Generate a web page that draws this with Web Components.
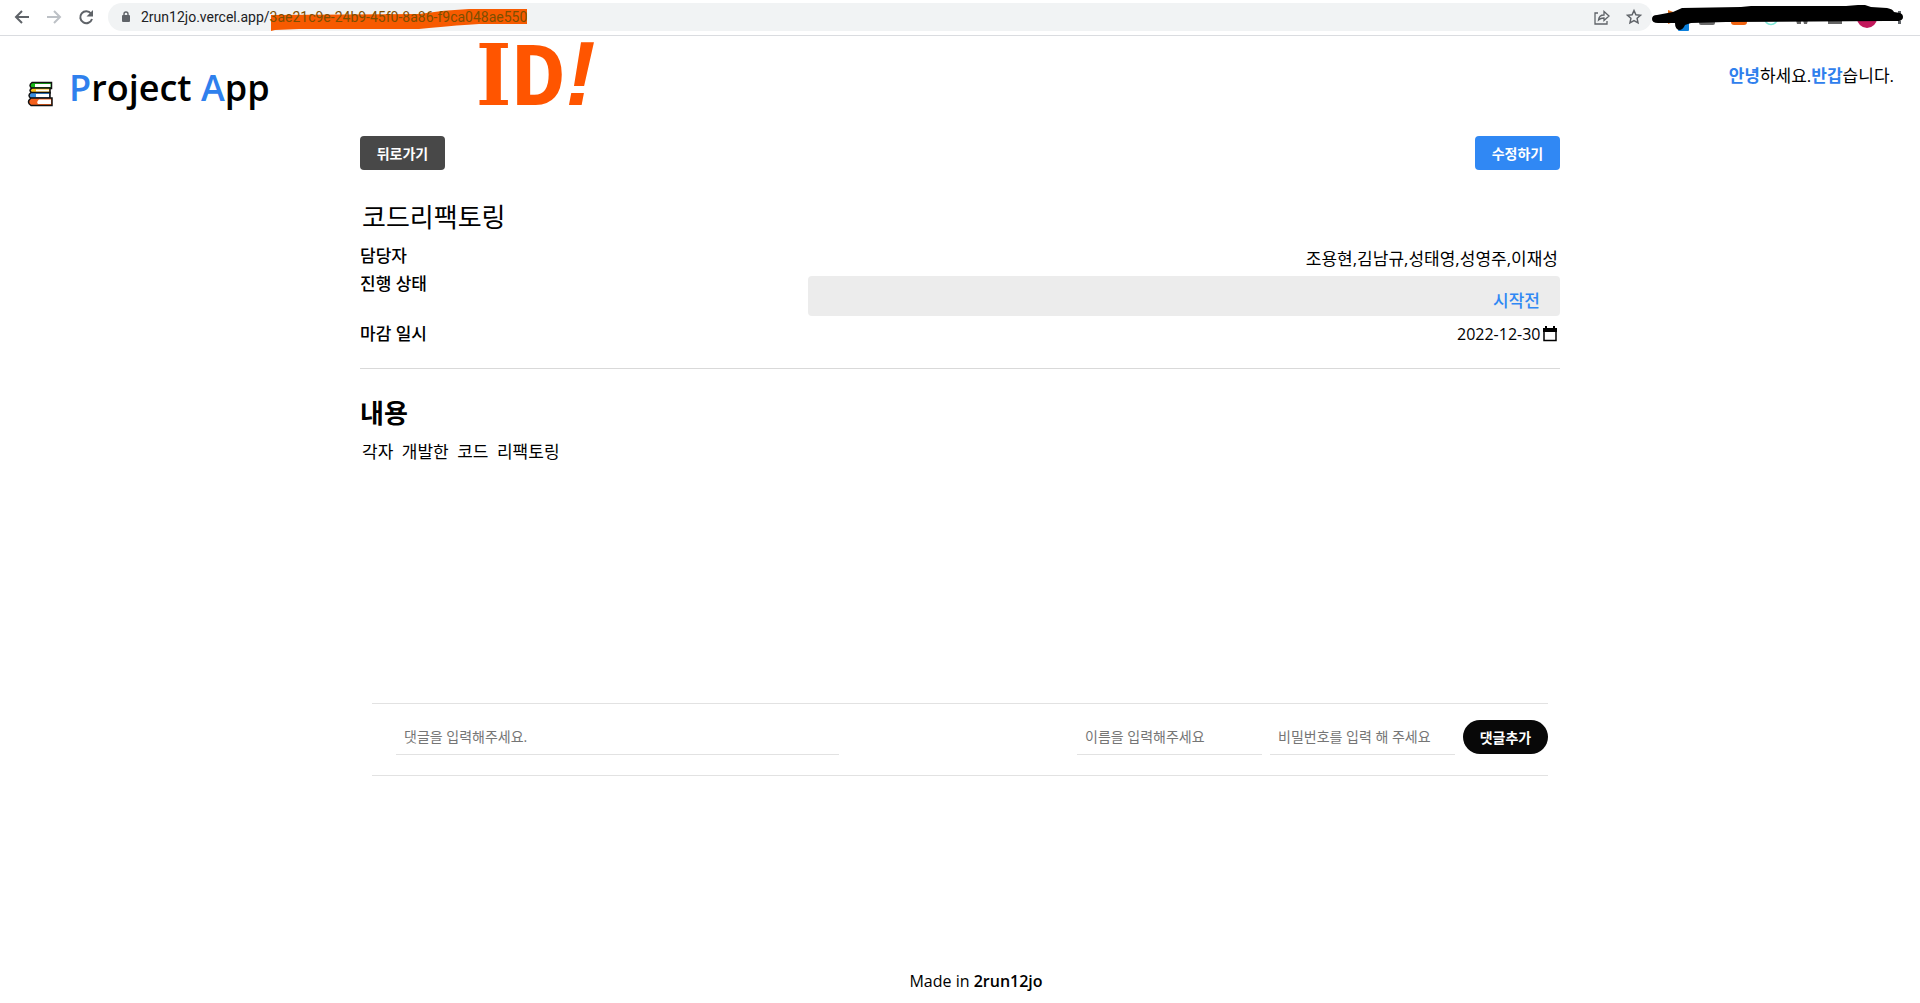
<!DOCTYPE html>
<html lang="ko">
<head>
<meta charset="utf-8">
<title>Project App</title>
<style>
    body {
        margin: 0;
        background: #fff;
        color: #000;
        font-family: "Open Sans", "Noto Sans CJK KR", sans-serif;
        font-size: 16px;
    }
</style>
</head>
<body>
<project-page></project-page>

<script>
function define(name, html, setup) {
    const template = document.createElement("template");
    template.innerHTML = html;

    window.customElements.define(name, class extends HTMLElement {
        constructor() {
            super();
            this.attachShadow({ mode: "open" });
            this.shadowRoot.appendChild(template.content.cloneNode(true));
            if (setup) setup(this, this.shadowRoot);
        }
    });
}

define("browser-bar", `
    <style>
        :host {
            display: flex;
            align-items: center;
            box-sizing: border-box;
            height: 36px;
            padding: 0 16px 2px 12px;
            border-bottom: 1px solid #dadce0;
            background: #fff;
        }
        button {
            display: flex;
            padding: 0;
            border: none;
            background: none;
        }
        .nav {
            display: flex;
            gap: 12px;
            width: 96px;
        }
        .address {
            display: flex;
            flex: 1;
            align-items: center;
            height: 28px;
            padding: 0 8px 0 12px;
            border-radius: 14px;
            background: #f1f3f4;
            color: #202124;
            font-family: Roboto, sans-serif;
            font-size: 14px;
            line-height: 18px;
        }
        .url {
            flex: 1;
            margin-left: 9px;
            white-space: nowrap;
        }
        .id {
            position: relative;
            z-index: 0;
            color: #7d4f00;
        }
        .id svg {
            position: absolute;
            left: 0;
            top: -4px;
            z-index: -1;
        }
        .tools {
            display: flex;
            gap: 12px;
        }
        .extensions {
            display: block;
        }
    </style>

    <div class="nav">
        <button aria-label="Back"><svg width="20" height="20" viewBox="0 0 20 20" fill="none" stroke="#5f6368" stroke-width="2"><path d="M17 10H4M10 4l-6 6 6 6"/></svg></button>
        <button aria-label="Forward"><svg width="20" height="20" viewBox="0 0 20 20" fill="none" stroke="#bdc1c6" stroke-width="2"><path d="M3 10h13M10 4l6 6-6 6"/></svg></button>
        <button aria-label="Reload"><svg width="20" height="20" viewBox="0 0 20 20"><path d="M15 6.5A6 6 0 1 0 16 12" fill="none" stroke="#5f6368" stroke-width="2"/><path d="M17 3v6.500h-6.500z" fill="#5f6368"/></svg></button>
    </div>
    <div class="address">
        <svg width="12" height="14" viewBox="0 0 12 14"><rect x="2" y="5" width="8" height="7" rx="1" fill="#5f6368"/><path d="M4 6V4a2 2 0 0 1 4 0v2" fill="none" stroke="#5f6368" stroke-width="1.400"/></svg>
        <span class="url">2run12jo.vercel.app/<span class="id"><svg width="260" height="30" viewBox="271 4 260 30"><path fill="#f75a00" d="M272 14L420 13Q445 9 470 8L528 8V23L480 23Q460 24 430 27L420 28H300L276 29 272 30z"/></svg>3ae21c9e-24b9-45f0-8a86-f9ca048ae550</span></span>
        <div class="tools">
            <button aria-label="Share"><svg width="20" height="20" viewBox="0 0 20 20" fill="none" stroke="#5f6368" stroke-width="1.300"><path d="M6 6H3v11h12v-3M6.500 13Q7 8 12 8V4.500L17 9l-5 4.500V11Q8.500 11 6.500 13z"/></svg></button>
            <button aria-label="Bookmark"><svg width="20" height="20" viewBox="0 0 20 20" fill="none" stroke="#5f6368" stroke-width="1.500"><path d="M10 3.500l1.900 4.200 4.600.5-3.400 3.100.9 4.500-4-2.300-4 2.300.9-4.500-3.400-3.100 4.600-.5z"/></svg></button>
        </div>
    </div>
    <svg class="extensions" width="252" height="34" viewBox="1651 0 252 34">
        <path fill="#e8731a" d="M1667 10l8 3v8l-8 3z"/>
        <rect x="1677" y="20" width="11" height="11" rx="1" fill="#0b7fdb"/>
        <rect x="1698" y="15" width="16" height="10" rx="2" fill="#6b6b6b"/>
        <rect x="1730" y="14" width="16" height="11" rx="3" fill="#f0620f"/>
        <circle cx="1770" cy="18" r="6.500" fill="none" stroke="#7fe8d8" stroke-width="1.500"/>
        <path fill="#666" d="M1795 20h5v4h-4zM1802 20h5l-1 4h-3zM1827 18h14v6h-14z"/>
        <circle cx="1866" cy="18" r="10" fill="#c2185b"/>
        <path fill="#5f6368" d="M1897 11h3v3h-3zM1897 21h3v3h-3z"/>
        <path d="M1656 15L1672 12 1681 8 1740 7 1750 6H1845L1857 5H1864L1870 7 1886 8Q1892 9 1893 12L1899 13Q1902 14 1902 17T1898 21H1885L1725 22 1690 23 1684 25Q1682 30 1678 30 1674 29 1674 23L1657 23Q1651 23 1651 19T1656 15z"/>
    </svg>
`);

define("page-header", `
    <style>
        :host {
            display: flex;
            justify-content: space-between;
            box-sizing: border-box;
            height: 100px;
            padding: 24px 26px 0 27px;
        }
        a {
            display: flex;
            align-items: center;
            gap: 16px;
            height: 56px;
            color: #000;
            text-decoration: none;
        }
        svg {
            margin-top: 12px;
        }
        h1 {
            margin: 0;
            font-size: 36px;
            font-weight: 600;
            line-height: 56px;
        }
        p {
            margin: 4px 0 0;
            font-size: 17px;
            line-height: 24px;
        }
        span, b {
            color: #2f80ed;
        }
    </style>

    <a href="#">
        <svg width="26" height="26" viewBox="0 0 26 26" stroke="#111" stroke-width="1.500">
            <path fill="#16b916" d="M5 1.500h19.500v6H5q-4-3 0-6z"/><path fill="#fff" stroke="none" d="M8 3h15.500v3H8z"/>
            <path fill="#ffc21a" d="M5 7h18v5H5q-4-2.500 0-5z"/><path fill="#fff" stroke="none" d="M9 8.500h13v2H9z"/>
            <path fill="#3a8fe0" d="M4 11.500h19v6H4q-4-3 0-6z"/><path fill="#fff" stroke="none" d="M9 13h13v3H9z"/>
            <path fill="#f4601c" d="M4 17h21v7.500H4q-5-3.500 0-7.500z"/><path fill="#fff" stroke="none" d="M12 18.500h12V23H11q-2-2 1-4.500z"/>
        </svg>
        <h1><span>P</span>roject <span>A</span>pp</h1>
    </a>
    <p><b>안녕</b>하세요.<b>반갑</b>습니다.</p>
`);

define("app-button", `
    <style>
        :host {
            display: block;
            width: 85px;
        }
        button {
            width: 100%;
            height: 34px;
            padding: 0;
            border: none;
            border-radius: 4px;
            background: #484848;
            color: #fff;
            font-family: inherit;
            font-size: 14px;
            font-weight: 600;
            cursor: pointer;
        }
        :host([kind="primary"]) button {
            background: #3088f4;
        }
        :host([kind="round"]) button {
            border-radius: 17px;
            background: #080808;
        }
    </style>

    <button><slot></slot></button>
`);

define("project-detail", `
    <style>
        :host {
            display: block;
            box-sizing: border-box;
            min-height: 567px;
        }
        .actions {
            display: flex;
            justify-content: space-between;
        }
        input, select, textarea {
            box-sizing: border-box;
            margin: 0;
            padding: 0 2px;
            border: none;
            outline: none;
            background: none;
            color: #000;
            font-family: inherit;
            font-size: 17px;
            resize: none;
        }
        .title {
            display: block;
            width: 100%;
            height: 40px;
            margin: 26px 0 6px;
            font-size: 26px;
        }
        .row {
            display: flex;
            justify-content: space-between;
            align-items: flex-start;
        }
        label {
            font-size: 17px;
            font-weight: 500;
            line-height: 28px;
        }
        .people {
            width: 320px;
            height: 30px;
            text-align: right;
        }
        .people-row {
            height: 34px;
        }
        .state {
            margin-bottom: 4px;
        }
        select {
            appearance: none;
            width: 752px;
            height: 40px;
            padding: 8px 20px 0 0;
            border-radius: 4px;
            background: #ececec;
            color: #3088f4;
            font-weight: 500;
            text-align-last: right;
        }
        .state label {
            margin-top: -6px;
        }
        .date {
            display: flex;
            align-items: center;
            height: 28px;
            padding-right: 3px;
        }
        .date input {
            width: 88px;
            font-size: 16px;
        }
        .date button {
            display: flex;
            padding: 0;
            border: none;
            background: none;
        }
        hr {
            height: 1px;
            margin: 20px 0 24px;
            border: none;
            background: #d9d9d9;
        }
        h2 {
            margin: 0 0 6px;
            font-size: 26px;
            font-weight: 600;
            line-height: 40px;
        }
        h2 label {
            font: inherit;
        }
        textarea {
            display: block;
            width: 100%;
            height: 200px;
            font-family: "Noto Sans Mono CJK KR", "Noto Sans CJK KR", monospace;
            font-size: 17px;
            font-weight: 300;
            line-height: 24px;
        }
    </style>

    <div class="actions">
        <app-button>뒤로가기</app-button>
        <app-button kind="primary">수정하기</app-button>
    </div>
    <input class="title" aria-label="제목" value="코드리팩토링">
    <div class="row people-row">
        <label for="people">담당자</label>
        <input class="people" id="people" value="조용현,김남규,성태영,성영주,이재성">
    </div>
    <div class="row state">
        <label for="state">진행 상태</label>
        <select id="state"><option>시작전</option></select>
    </div>
    <div class="row">
        <label for="due">마감 일시</label>
        <div class="date">
            <input id="due" value="2022-12-30">
            <button aria-label="달력">
                <svg width="14" height="16" viewBox="0 0 14 16"><path d="M1 3h12v11.500H1z" fill="none" stroke="#000" stroke-width="1.500"/><path d="M0 2h14v4H0zM2 0h2v3H2zM10 0h2v3h-2z"/></svg>
            </button>
        </div>
    </div>
    <hr>
    <h2><label for="content">내용</label></h2>
    <textarea id="content" spellcheck="false">각자 개발한 코드 리팩토링</textarea>
`);

define("line-input", `
    <style>
        :host {
            display: block;
            width: 185px;
        }
        input {
            box-sizing: border-box;
            width: 100%;
            height: 35px;
            padding: 0 8px 2px;
            border: none;
            border-bottom: 1px solid #e2e2e2;
            outline: none;
            background: none;
            font-family: inherit;
            font-size: 14px;
        }
        input::placeholder {
            color: #757575;
        }
    </style>

    <input>
`, (host, root) => {
    const input = root.querySelector("input");
    input.placeholder = host.getAttribute("text");
    input.setAttribute("aria-label", input.placeholder);
    input.type = host.getAttribute("type") || "text";
});

define("comment-form", `
    <style>
        :host {
            display: flex;
            gap: 8px;
            box-sizing: border-box;
            height: 73px;
            margin: 0 12px;
            padding: 16px 0 0 24px;
            border-top: 1px solid #e2e2e2;
            border-bottom: 1px solid #e2e2e2;
        }
        .comment {
            width: 443px;
            margin-right: auto;
        }
    </style>

    <line-input class="comment" text="댓글을 입력해주세요."></line-input>
    <line-input text="이름을 입력해주세요"></line-input>
    <line-input type="password" text="비밀번호를 입력 해 주세요"></line-input>
    <app-button kind="round">댓글추가</app-button>
`);

define("page-footer", `
    <style>
        :host {
            display: block;
            padding: 0 0 10px 32px;
            text-align: center;
            line-height: 24px;
        }
        b {
            font-weight: 600;
        }
    </style>

    Made in <b>2run12jo</b>
`);

/* Orange note written over the page, pointing at the id in the address */
define("id-note", `
    <style>
        :host {
            position: absolute;
            left: 476px;
            top: 24px;
            display: flex;
            align-items: baseline;
            color: #ff5500;
            font-family: "Liberation Mono", monospace;
            font-size: 90px;
            font-weight: bold;
            line-height: 100px;
        }
        .serif {
            font-family: "DejaVu Serif Condensed", "DejaVu Serif", serif;
            font-size: 84px;
        }
        .mark {
            font-family: "Liberation Sans", sans-serif;
            font-style: italic;
        }
    </style>

    <span class="serif">I</span><span>D</span><span class="mark">!</span>
`);

define("project-page", `
    <style>
        :host {
            display: flex;
            flex-direction: column;
            min-height: 100vh;
        }
        main {
            width: 1200px;
            max-width: 100%;
            margin: 0 auto;
        }
        page-footer {
            margin-top: auto;
        }
    </style>

    <browser-bar></browser-bar>
    <page-header></page-header>
    <main>
        <project-detail></project-detail>
        <comment-form></comment-form>
    </main>
    <page-footer></page-footer>
    <id-note></id-note>
`);
</script>
</body>
</html>
